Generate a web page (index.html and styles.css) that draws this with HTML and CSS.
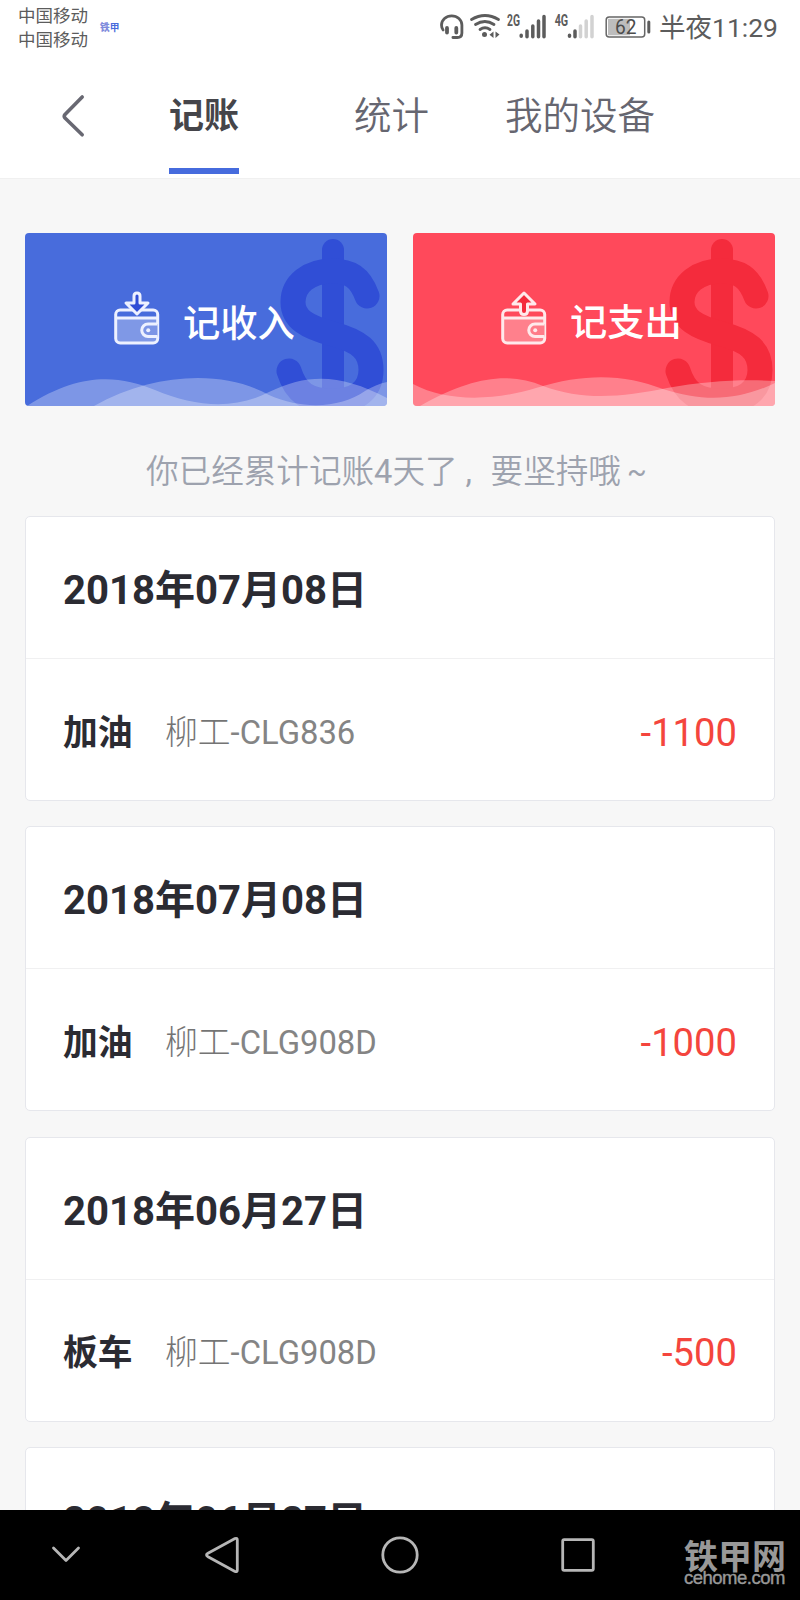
FILE: index.html
```
<!DOCTYPE html>
<html lang="zh-CN">
<head>
<meta charset="utf-8">
<title>记账</title>
<link rel="stylesheet" href="styles.css">
</head>
<body>
<div class="phone">
  <header class="top">
    <div class="status">
      <div class="carriers"><span>中国移动</span><span>中国移动</span></div>
      <div class="brand"><b>铁</b>甲</div>
      <svg class="indicators" width="220" height="41" viewBox="-1.500 -0.500 220 41">
        <g fill="none" stroke="#5c5c5c" stroke-width="2.800" stroke-linecap="round">
          <path d="M3.600 29.500Q2 27.500 2 24.500a10.200 9.200 0 0 1 20.400 0V32.500q0 4.500-4.500 4.500h-4.500"/>
          <path d="M7.500 27.500v4.500M16.800 27.500v4.500" stroke-width="3.800"/>
          <path d="M32 19q13.500-8 27 0M36 24q9.500-6 18.500 0M40.500 29q5-3.500 10 0"/>
        </g>
        <circle cx="45" cy="34" r="2.500" fill="#5c5c5c"/>
        <path d="M54 31v6.500l-4-3.200zM56 31v6.500l4-3.500z" fill="#5c5c5c"/>
        <text class="net" x="67.500" y="25" textLength="13" lengthAdjust="spacingAndGlyphs">2G</text>
        <g stroke="#5c5c5c" stroke-width="3.500" stroke-linecap="round">
          <path d="M81.700 34.800v1M87.500 30.500v5.700M93.300 25.500v10.700M99 20.500v15.700M104.500 16v20.200"/>
          <path d="M130 34.800v1M135.500 30.500v5.700"/>
          <path d="M141 25.500v10.700M146.700 20.500v15.700M152.500 16v20.200" stroke="#d2d2d2"/>
        </g>
        <text class="net" x="115.200" y="25" textLength="13.500" lengthAdjust="spacingAndGlyphs">4G</text>
        <rect x="166.700" y="16.500" width="38.500" height="20" rx="3" fill="#fff" stroke="#666" stroke-width="1.500"/>
        <rect x="168.500" y="18.300" width="22" height="16.500" fill="#bdbdbd"/>
        <path d="M209.300 21.500v10" stroke="#5c5c5c" stroke-width="3" stroke-linecap="round"/>
        <text class="level" x="175.500" y="33.500" textLength="21.500" lengthAdjust="spacingAndGlyphs">62</text>
      </svg>
      <div class="clock">半夜11:29</div>
    </div>
    <nav class="tabs">
      <svg class="back" width="24" height="44" viewBox="0 0 24 44" fill="none" stroke="#686872" stroke-width="3.600" stroke-linecap="round" stroke-linejoin="round"><path d="M21.200 3L4 20.500q-1.500 1.800 0 3.500L21.200 40.800"/></svg>
      <span class="tab tab-active">记账</span>
      <span class="tab tab-stats">统计</span>
      <span class="tab tab-devices">我的设备</span>
    </nav>
  </header>

  <main class="content">
    <section class="actions">
      <div class="action income">
        <svg class="art" width="362" height="173" viewBox="0 0 362 173">
          <g class="dollar" fill="none" stroke="#304ed6">
            <path d="M308 17v142" stroke-width="22" stroke-linecap="round"/>
            <path d="M342 63C335 44 325 38 307 38C284 38 268 51 268 69C268 86 282 94 308 101C334 108 346 117 346 137C346 158 331 168 308 168C283 168 271 160 264 138" stroke-width="25" stroke-linecap="round"/>
          </g>
          <path d="M2 173C55 139 93 142 130 157C170 174 210 177 244 159C285 139 318 142 362 165V173Z" fill="#fff" fill-opacity=".29"/>
          <path d="M69 173C130 139 200 137 244 162C280 178 317 174 340 158Q352 151 362 149V173Z" fill="#fff" fill-opacity=".29"/>
        </svg>
        <svg class="wallet" width="46" height="56" viewBox="0 0 46 56" fill="none" stroke="#edf1ff" stroke-width="3" stroke-linejoin="round">
          <path d="M2 28H44V48q0 5-5 5H7q-5 0-5-5Z" fill="#fff" fill-opacity=".3" stroke="none"/>
          <rect x="1.700" y="20" width="42" height="33" rx="4.500"/>
          <path d="M2 28H43"/>
          <path d="M43.500 34H34a6 6 0 0 0 0 12.500h9.500" fill="#7c95e6"/>
          <circle cx="34.200" cy="40.200" r="2" fill="#edf1ff" stroke="none"/>
          <path d="M20 13V6q0-3 3-3t3 3v7h8L23 24 12 13Z" fill="#304ed6"/>
        </svg>
        <span class="action-label">记收入</span>
      </div>
      <div class="action expense">
        <svg class="art" width="362" height="173" viewBox="0 0 362 173">
          <g class="dollar" fill="none" stroke="#f42b3c">
            <path d="M309 17v142" stroke-width="22" stroke-linecap="round"/>
            <path d="M343 63C336 44 326 38 308 38C285 38 269 51 269 69C269 86 283 94 309 101C335 108 347 117 347 137C347 158 332 168 309 168C284 168 272 160 265 138" stroke-width="25" stroke-linecap="round"/>
          </g>
          <path d="M0 151C35 170 84 167 123 155C175 139 213 142 250 156C290 169 325 168 362 150V173H0Z" fill="#fff" fill-opacity=".3"/>
          <path d="M7 173C60 143 96 139 130 153C170 168 210 164 254 155C292 148 330 146 362 148V173Z" fill="#fff" fill-opacity=".3"/>
        </svg>
        <svg class="wallet" width="46" height="56" viewBox="0 0 46 56" fill="none" stroke="#ffe9eb" stroke-width="3" stroke-linejoin="round">
          <path d="M2 28H44V48q0 5-5 5H7q-5 0-5-5Z" fill="#fff" fill-opacity=".3" stroke="none"/>
          <rect x="1.700" y="20" width="42" height="33" rx="4.500"/>
          <path d="M2 28H43"/>
          <path d="M43.500 34H34a6 6 0 0 0 0 12.500h9.500" fill="#ff7c89"/>
          <circle cx="34.200" cy="40.200" r="2" fill="#ffe9eb" stroke="none"/>
          <path d="M19.500 14H12L23 3 34 14H26.500v7q0 3.500-3.500 3.500t-3.500-3.500Z" fill="#f42b3c"/>
        </svg>
        <span class="action-label">记支出</span>
      </div>
    </section>

    <p class="hint">你已经累计记账<span class="count">4</span>天了<span class="comma">,</span>要坚持哦<span class="tilde">~</span></p>

    <section class="records">
      <article class="card">
        <h2 class="date">2018年07月08日</h2>
        <div class="entry"><span class="kind">加油</span><span class="maker">柳工</span><span class="model">-CLG836</span><span class="amount">-1100</span></div>
      </article>
      <article class="card">
        <h2 class="date">2018年07月08日</h2>
        <div class="entry"><span class="kind">加油</span><span class="maker">柳工</span><span class="model">-CLG908D</span><span class="amount">-1000</span></div>
      </article>
      <article class="card">
        <h2 class="date">2018年06月27日</h2>
        <div class="entry"><span class="kind">板车</span><span class="maker">柳工</span><span class="model">-CLG908D</span><span class="amount">-500</span></div>
      </article>
      <article class="card">
        <h2 class="date">2018年06月27日</h2>
      </article>
    </section>
  </main>

  <footer class="navbar">
    <svg width="40" height="40" viewBox="0 0 40 40"><path d="M7.500 13L20 25.500 32.500 13"/></svg>
    <svg width="40" height="40" viewBox="0 0 40 40"><path d="M33 3.500L6 18.300q-3 1.700 0 3.400L33 36.500q2.300.8 2.300-1.500V5q0-2.300-2.300-1.500Z"/></svg>
    <svg width="40" height="40" viewBox="0 0 40 40"><circle cx="20" cy="20" r="17.200"/></svg>
    <svg width="40" height="40" viewBox="0 0 40 40"><rect x="4.700" y="4.700" width="30.600" height="30.600" rx="1.500"/></svg>
    <div class="watermark"><strong>铁甲网</strong><span>cehome.com</span></div>
  </footer>
</div>
</body>
</html>
```
FILE: styles.css
```
* { box-sizing: border-box; }
body {
  margin: 0;
  font-family: Roboto, "Noto Sans CJK SC", sans-serif;
  background: #f7f7f7;
}
.phone {
  width: 800px;
  height: 1600px;
  display: flex;
  flex-direction: column;
  overflow: hidden;
}
.top {
  height: 179px;
  flex: none;
  background: #fff;
  border-bottom: 1px solid #f0f0f0;
}
.status {
  display: flex;
  height: 56px;
  padding-left: 18px;
  color: #5c5c5c;
}
.carriers {
  display: flex;
  flex-direction: column;
  width: 82px;
  padding-top: 4px;
  font-size: 17.500px;
  line-height: 24.300px;
  white-space: nowrap;
}
.brand {
  width: 338px;
  padding-top: 18px;
  font-size: 9.700px;
  line-height: 20px;
  font-weight: 700;
  color: #486bdc;
}
.brand b { color: #7f8bdc; }
.indicators { flex: none; }
.net { font: 700 16px Roboto, sans-serif; fill: #5c5c5c; }
.level { font: 20px Roboto, sans-serif; fill: #4c4c4c; }
.clock {
  padding-left: 1px;
  font-size: 26.500px;
  line-height: 56px;
  white-space: nowrap;
}
.tabs {
  display: flex;
  height: 122px;
  padding-left: 61px;
  color: #666670;
}
.back { margin-top: 38px; flex: none; }
.tab {
  height: 118px;
  font-size: 37.500px;
  line-height: 121px;
  font-weight: 350;
  white-space: nowrap;
}
.tab-active {
  width: 70px;
  margin-left: 84px;
  font-size: 35px;
  font-weight: 700;
  color: #45454a;
  border-bottom: 6px solid #466bdd;
}
.tab-stats { width: 75px; margin-left: 115px; }
.tab-devices { margin-left: 76px; }
.content {
  flex: 1;
  min-height: 0;
  overflow: hidden;
  padding: 54px 25px 0;
}
.actions {
  display: grid;
  grid-template-columns: 362px 362px;
  justify-content: space-between;
}
.action {
  position: relative;
  display: flex;
  align-items: flex-start;
  height: 173px;
  padding-left: 89px;
  border-radius: 4px;
  overflow: hidden;
}
.expense { padding-left: 88px; }
.income { background: #486cdc; }
.expense { background: #ff495b; }
.art { position: absolute; left: 0; top: 0; }
.wallet { position: relative; margin-top: 57px; flex: none; }
.action-label {
  position: relative;
  margin: 62px 0 0 23px;
  font-size: 37.300px;
  line-height: 56px;
  font-weight: 500;
  color: #fff;
}
.income .action-label { margin-top: 63px; }
.hint {
  height: 110px;
  margin: 0;
  padding-left: 121px;
  display: flex;
  font-size: 32.600px;
  line-height: 132px;
  font-weight: 350;
  color: #9da2ae;
  white-space: nowrap;
}
.count { font-weight: 400; }
.comma { width: 33px; padding-left: 8px; font-weight: 400; }
.tilde { padding-left: 6px; font-size: 29px; font-weight: 400; }
.records {
  display: flex;
  flex-direction: column;
  gap: 25.300px;
}
.card {
  flex: none;
  height: 285px;
  background: #fff;
  border: 1px solid #e6e7ec;
  border-radius: 5px;
}
.date {
  height: 142px;
  margin: 0;
  padding-left: 37px;
  border-bottom: 1px solid #f0f0f1;
  font-size: 40.100px;
  line-height: 147px;
  font-weight: 700;
  color: #2b2b32;
}
.entry {
  display: flex;
  align-items: center;
  height: 141px;
  padding: 6px 37px 0;
  line-height: 50px;
}
.kind {
  width: 102px;
  font-size: 34.800px;
  font-weight: 700;
  color: #2b2b32;
}
.maker, .model {
  font-size: 32.800px;
  color: #848484;
}
.maker { font-weight: 300; color: #747474; }
.amount {
  margin-left: auto;
  font-size: 38.200px;
  color: #f4453d;
}
.navbar {
  position: relative;
  flex: none;
  display: flex;
  height: 90px;
  padding: 25px 0 0 46px;
  background: #000;
}
.navbar svg {
  fill: none;
  stroke: #b6b6b6;
  stroke-width: 2.800px;
  stroke-linecap: round;
  stroke-linejoin: round;
}
.navbar svg + svg { margin-left: 138px; }
.navbar svg:nth-child(2) { margin-left: 116px; }
.watermark {
  position: absolute;
  left: 684px;
  top: 32px;
  display: flex;
  flex-direction: column;
  color: #989898;
}
.watermark strong { font-size: 34px; line-height: 30px; }
.watermark span {
  font: 18.500px/12px "Liberation Sans", sans-serif;
  letter-spacing: -.5px;
  -webkit-text-stroke: .4px #989898;
}
```
